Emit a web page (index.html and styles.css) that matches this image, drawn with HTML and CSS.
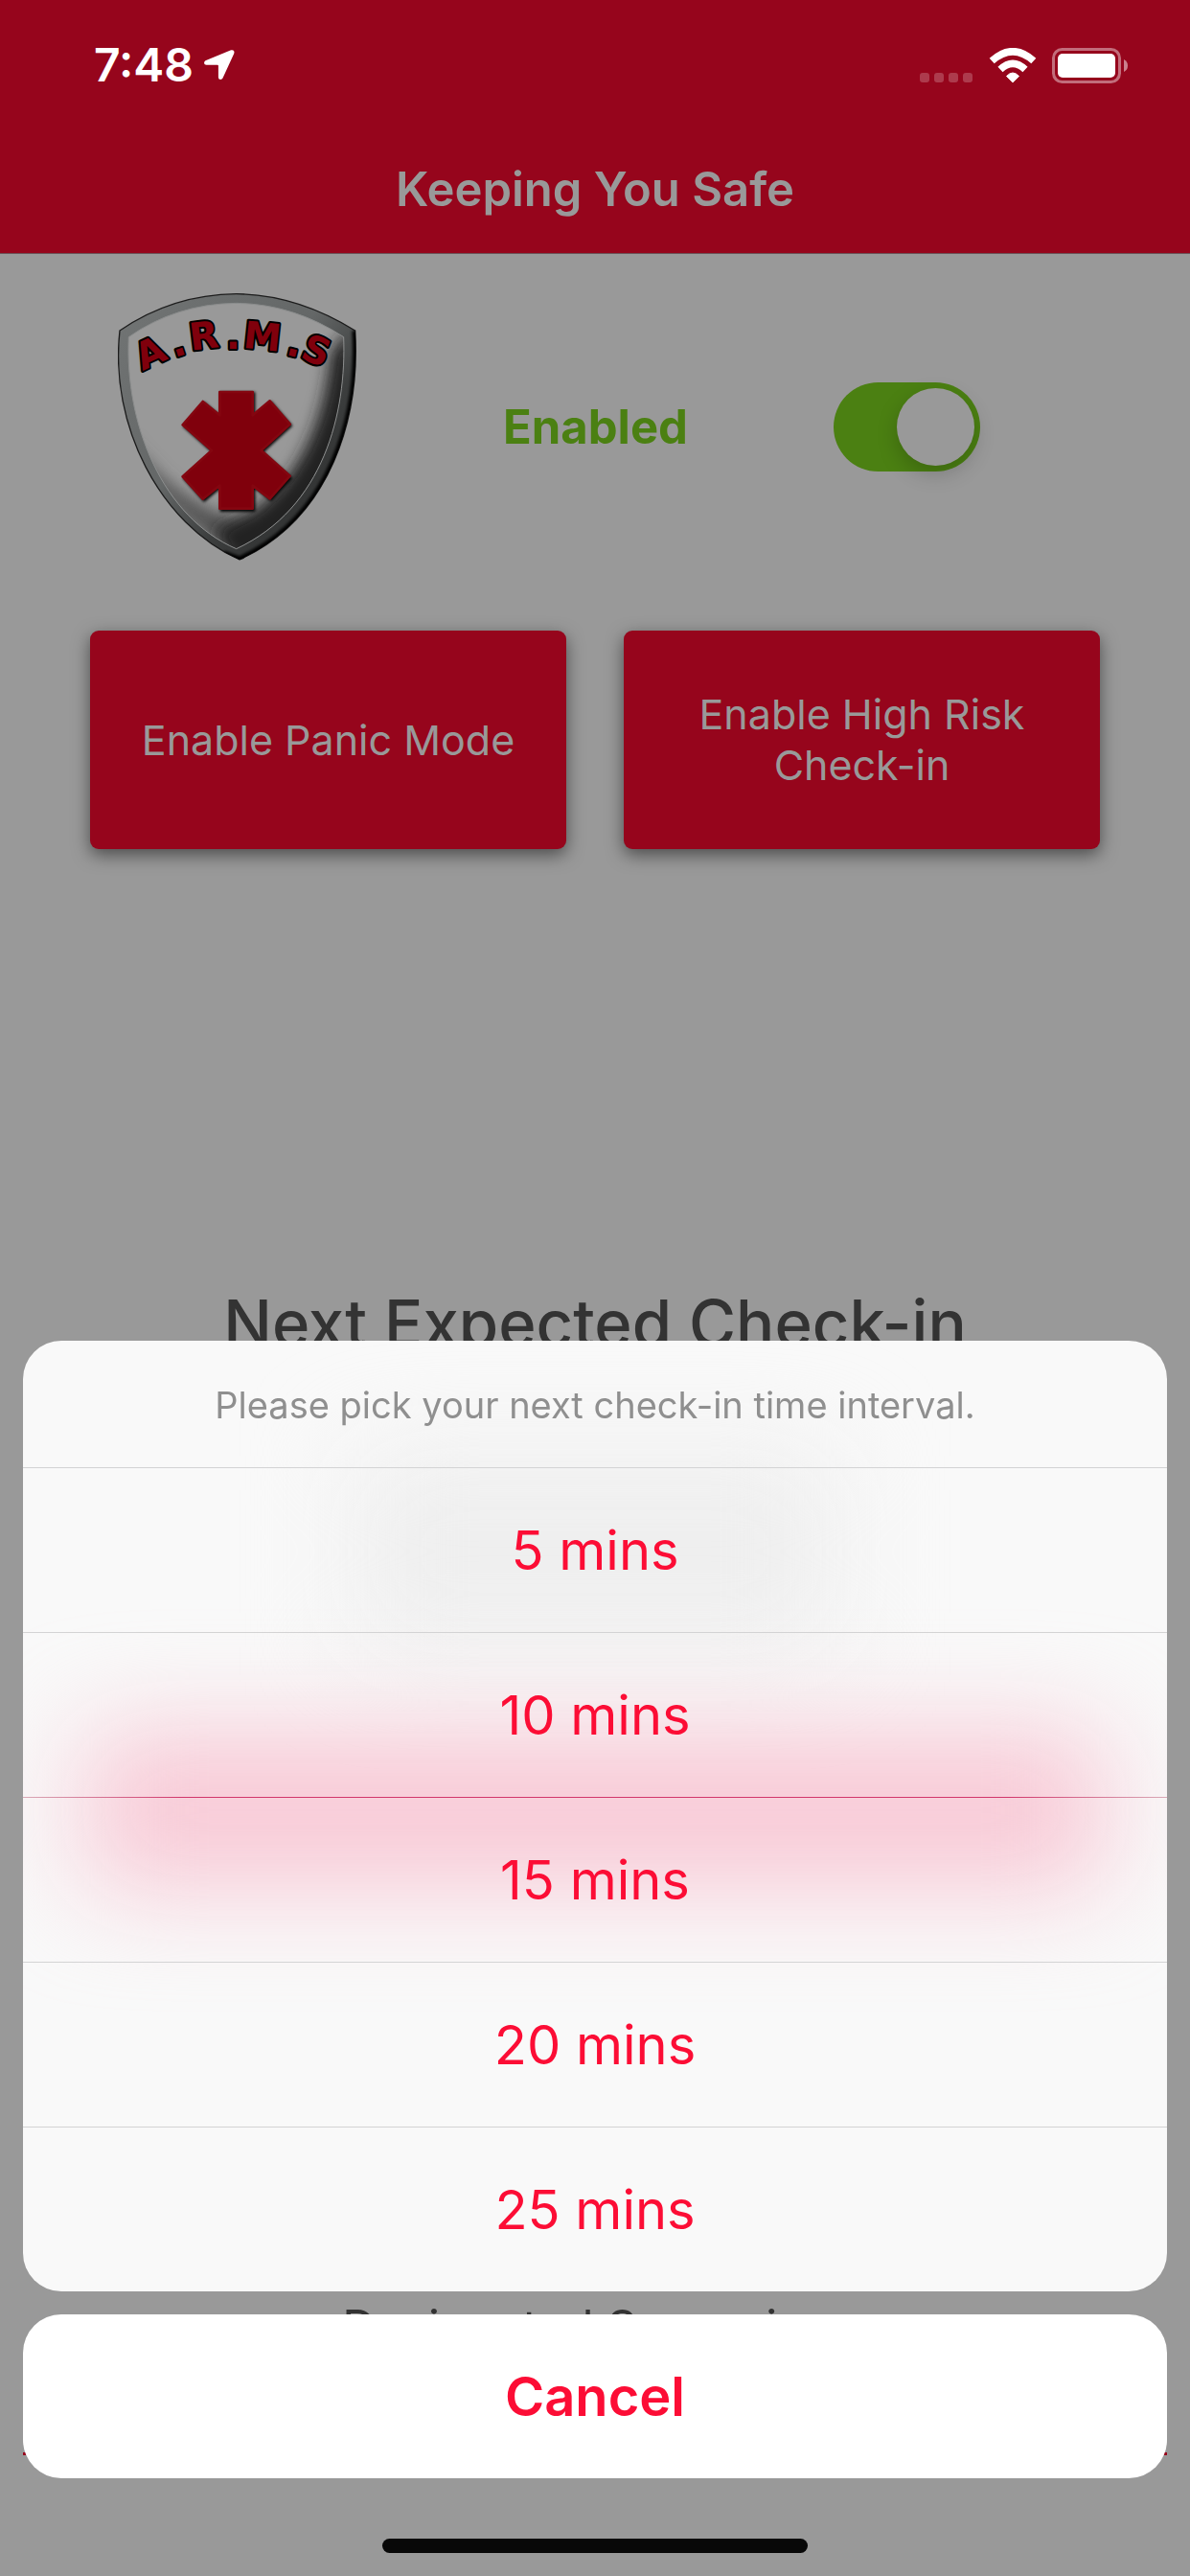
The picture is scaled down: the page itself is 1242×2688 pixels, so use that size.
FILE: index.html
```html
<!DOCTYPE html>
<html lang="en">
<head>
<meta charset="utf-8">
<meta name="viewport" content="width=device-width, initial-scale=1">
<title>Keeping You Safe</title>
<link rel="stylesheet" href="styles.css">
</head>
<body>
<div class="app">
  <header class="topbar">
    <div class="status">
      <div class="status-left">
        <span class="time">7:48</span>
        <svg class="icon-location" viewBox="0 0 34 34" aria-hidden="true"><path d="M28.500 1.500L3 12C.2 13.200.6 16.700 3.500 16.800H15c.6 0 .9.300.9.900V29.500c.1 3 3.500 3.400 4.700.8L32.200 5C33.400 2 31.200.4 28.500 1.500z" fill="#fff"/></svg>
      </div>
      <div class="status-right">
        <svg class="icon-signal" viewBox="0 0 56 10" aria-hidden="true"><g fill="#fff" fill-opacity=".22"><rect width="10" height="10" rx="3"/><rect x="15" width="10" height="10" rx="3"/><rect x="30" width="10" height="10" rx="3"/><rect x="45" width="10" height="10" rx="3"/></g></svg>
        <svg class="icon-wifi" viewBox="0 0 50 37" aria-hidden="true"><g fill="none" stroke="#fff" stroke-width="7.500"><path d="M3.200 13.500Q25-6 46.800 13.500"/><path d="M12 22.500Q25 10.300 38 22.500"/></g><path d="M18.500 29.500Q25 22.500 31.500 29.500L25 36z" fill="#fff" stroke="#fff" stroke-linejoin="round"/></svg>
        <svg class="icon-battery" viewBox="0 0 80 37" aria-hidden="true"><rect x="1.500" y="1.500" width="69" height="34" rx="9" fill="none" stroke="#fff" stroke-opacity=".42" stroke-width="3"/><rect x="6" y="6" width="60" height="25" rx="5" fill="#fff"/><path d="M75 12q4 2 4 6.500t-4 6.500z" fill="#fff" fill-opacity=".5"/></svg>
      </div>
    </div>
    <h1 class="title">Keeping You Safe</h1>
  </header>

  <main class="content">
    <section class="protection">
      <svg class="logo" viewBox="69 45 750 840" role="img" aria-label="A.R.M.S shield">
        <defs>
          <linearGradient id="rim" x1="0" y1="0" x2="1" y2="1"><stop offset="0" stop-color="#727575"/><stop offset=".45" stop-color="#646767"/><stop offset=".65" stop-color="#3c3e3e"/><stop offset="1" stop-color="#242525"/></linearGradient>
          <filter id="soft" x="-20%" y="-20%" width="140%" height="140%"><feGaussianBlur stdDeviation="24"/></filter>
          <filter id="edge"><feGaussianBlur stdDeviation="4"/></filter>
          <clipPath id="outer"><path d="M75 165Q240 52 440 50Q630 52 812 165C828 430 740 750 450 882C200 770 42 460 75 165z"/></clipPath>
          <clipPath id="face"><path d="M103 185Q250 82 440 79Q620 82 776 185C785 420 715 720 440 848C210 750 90 460 103 185z"/></clipPath>
        </defs>
        <path d="M75 165Q240 52 440 50Q630 52 812 165C828 430 740 750 450 882C200 770 42 460 75 165z" fill="url(#rim)" stroke="#1c1c1c" stroke-width="4"/>
        <g clip-path="url(#outer)"><path d="M812 165C828 430 740 750 450 882L400 864" fill="none" stroke="#000" stroke-width="20" filter="url(#edge)"/></g>
        <g clip-path="url(#face)">
          <rect x="69" y="45" width="750" height="840" fill="#999"/>
          <path d="M100 500C150 650 290 790 440 860L520 760C380 760 240 680 100 500z" fill="#555" filter="url(#soft)"/>
          <path d="M800 150L735 235C720 420 655 590 530 700C480 745 420 770 370 790L440 900L860 700z" fill="#222" filter="url(#soft)"/>
        </g>
        <path d="M103 185Q250 82 440 79Q620 82 776 185C785 420 715 720 440 848C210 750 90 460 103 185z" fill="none" stroke="#8b8d8d" stroke-width="3"/>
        <path d="M385 352H495V425L545 380L612 458L522 540L612 622L545 695L495 655V727H385V655L335 697L268 622L358 540L268 460L335 382L385 425z" transform="translate(4 5)" fill="#000" filter="url(#edge)"/>
        <path d="M388 357H491V430L545 385L608 458L518 540L608 620L545 691L491 650V722H388V650L335 692L272 622L363 540L272 460L335 387L388 430z" fill="#80000c" stroke="#840610" stroke-width="8" stroke-linejoin="round"/>
        <g class="logo-text">
          <text transform="translate(146 291) rotate(-25)">A</text>
          <text transform="translate(246 250) rotate(-18)">.</text>
          <text transform="translate(298 227) rotate(-7)">R</text>
          <text transform="translate(407 222)">.</text>
          <text transform="translate(459 218) rotate(6)">M</text>
          <text transform="translate(592 239) rotate(14)">.</text>
          <text transform="translate(636 250) rotate(22)">S</text>
        </g>
      </svg>
      <label class="protection-label" for="protection">Enabled</label>
      <input class="switch" id="protection" type="checkbox" role="switch" checked>
    </section>

    <div class="actions">
      <button class="action" type="button">Enable Panic Mode</button>
      <button class="action" type="button">Enable High Risk Check-in</button>
    </div>

    <h2 class="next">Next Expected Check-in</h2>

    <section class="supervisor">
      <h3 class="supervisor-title">Designated Supervisor</h3>
      <hr class="supervisor-rule">
    </section>
  </main>
</div>

<div class="overlay" role="dialog" aria-labelledby="prompt">
  <div class="sheet">
    <p class="prompt" id="prompt">Please pick your next check-in time interval.</p>
    <button class="option" type="button">5 mins</button>
    <button class="option" type="button">10 mins</button>
    <button class="option option-tinted" type="button">15 mins</button>
    <button class="option" type="button">20 mins</button>
    <button class="option" type="button">25 mins</button>
  </div>
  <button class="cancel" type="button">Cancel</button>
  <div class="home-indicator"></div>
</div>
</body>
</html>
```
FILE: styles.css
```css
:root {
  --brand: #96051c;
  --accent: #fc0d35;
  --dimmed: #999;
  --green: #4b8012;
}

* {
  box-sizing: border-box;
}

body {
  margin: 0;
  background: var(--dimmed);
  font-family: Inter, "Liberation Sans", sans-serif;
}

h1,
h2,
h3,
p {
  margin: 0;
}

button {
  border: 0;
  padding: 0;
  font-family: inherit;
}

.app {
  display: flex;
  flex-direction: column;
  min-height: 100vh;
}

/* Status and navigation bar */
.topbar {
  background: var(--brand);
  border-bottom: 1px solid #6b5257;
}

.status {
  display: flex;
  justify-content: space-between;
  height: 132px;
  padding: 0 64px 0 98px;
}

.status-left,
.status-right {
  display: flex;
  align-items: center;
}

.status-left {
  gap: 10px;
  padding-top: 4px;
}

.status-right {
  gap: 16px;
  padding-top: 4px;
}

.time {
  color: #fff;
  font-size: 48px;
  font-weight: 600;
  line-height: 60px;
}

.icon-location {
  width: 34px;
  height: 34px;
}

.icon-signal {
  width: 56px;
  height: 10px;
  margin-top: 25px;
}

.icon-wifi {
  width: 50px;
  height: 37px;
}

.icon-battery {
  width: 80px;
  height: 37px;
}

.title {
  height: 132px;
  color: var(--dimmed);
  font-size: 49px;
  font-weight: 600;
  line-height: 132px;
  text-align: center;
}

/* Screen content */
.content {
  display: flex;
  flex: 1;
  flex-direction: column;
}

.protection {
  display: flex;
  align-items: center;
  justify-content: space-between;
  padding: 40px 219px 0 123px;
}

.logo {
  width: 250px;
  height: 280px;
}

.logo-text {
  fill: #80000c;
  stroke: #000;
  stroke-width: 12px;
  stroke-linejoin: round;
  paint-order: stroke;
  font-family: "DejaVu Sans", sans-serif;
  font-size: 118px;
  font-weight: 700;
}

.protection-label {
  color: var(--green);
  font-size: 49px;
  font-weight: 700;
}

.switch {
  width: 153px;
  height: 93px;
  margin: 0;
  padding: 6px;
  border-radius: 47px;
  appearance: none;
  background: #888;
}

.switch::before {
  display: block;
  width: 81px;
  height: 81px;
  border-radius: 50%;
  background: var(--dimmed);
  box-shadow: 0 8px 22px rgba(0, 0, 0, 0.2);
  content: "";
}

.switch:checked {
  background: var(--green);
}

.switch:checked::before {
  margin-left: auto;
}

.actions {
  display: grid;
  grid-template-columns: 1fr 1fr;
  gap: 60px;
  padding: 73px 94px 0;
}

.action {
  height: 228px;
  padding: 0 48px;
  border-radius: 9px;
  background: var(--brand);
  box-shadow: 0 6px 18px rgba(0, 0, 0, 0.5);
  color: var(--dimmed);
  font-size: 43px;
  line-height: 53px;
}

.next {
  margin-top: 451px;
  color: #333;
  font-size: 67px;
  font-weight: 500;
  line-height: 88px;
  text-align: center;
}

.supervisor {
  margin-top: auto;
  padding: 0 24px 126px;
}

.supervisor-title {
  color: #333;
  font-size: 49px;
  font-weight: 400;
  line-height: 60px;
  text-align: center;
}

.supervisor-rule {
  height: 3px;
  margin: 100px 0 0;
  border: 0;
  background: var(--brand);
}

/* Action sheet */
.overlay {
  position: fixed;
  inset: 0;
  display: flex;
  flex-direction: column;
  justify-content: flex-end;
  padding: 0 24px 24px;
}

.sheet {
  position: relative;
  overflow: hidden;
  border-radius: 40px;
  background: #f9f9f9;
}

/* Colour of the screen behind, showing softly through the sheet */
.sheet::before,
.sheet::after {
  position: absolute;
  z-index: 0;
  content: "";
}

.sheet::before {
  inset: 120px 29% auto;
  height: 200px;
  background: #eee;
  filter: blur(54px);
}

.sheet::after {
  inset: 410px 64px auto;
  height: 160px;
  background: #f8c8d5;
  filter: blur(54px);
}

.prompt {
  position: relative;
  z-index: 1;
  height: 132px;
  color: #8f8f8f;
  font-size: 38px;
  line-height: 134px;
  text-align: center;
}

.option {
  position: relative;
  z-index: 1;
  display: block;
  width: 100%;
  height: 172px;
  border-top: 1px solid #d3d3d4;
  background: none;
  color: var(--accent);
  font-size: 56px;
}

.option-tinted {
  border-image: linear-gradient(90deg, #d9a9b6, #d2366b 14%, #d2366b 86%, #d9a9b6) 1;
}

.cancel {
  height: 171px;
  margin-top: 24px;
  border-radius: 40px;
  background: #fff;
  color: var(--accent);
  font-size: 56px;
  font-weight: 600;
}

.home-indicator {
  align-self: center;
  width: 444px;
  height: 15px;
  margin-top: 63px;
  border-radius: 8px;
  background: #080808;
}
```
